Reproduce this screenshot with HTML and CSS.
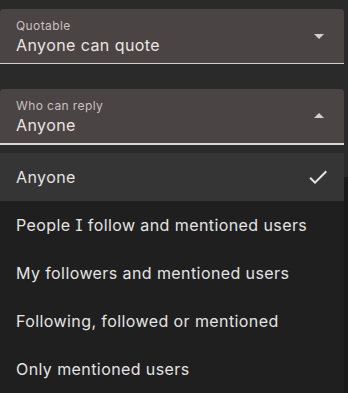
FILE: index.html
```html
<!DOCTYPE html>
<html>
<head>
<meta charset="utf-8">
<link rel="stylesheet" href="styles.css">
</head>
<body>
<div class="page">
  <div class="field">
    <div class="field-text">
      <div class="label">Quotable</div>
      <div class="value">Anyone can quote</div>
    </div>
    <svg class="arrow" viewBox="0 0 24 24" width="24" height="24"><path d="M7 10l5 5 5-5z" fill="#d8d0d0"/></svg>
  </div>
  <div class="field focused">
    <div class="field-text">
      <div class="label">Who can reply</div>
      <div class="value">Anyone</div>
    </div>
    <svg class="arrow" viewBox="0 0 24 24" width="24" height="24"><path d="M7 14l5-5 5 5z" fill="#d8d0d0"/></svg>
  </div>
  <ul class="menu">
    <li class="item selected"><span>Anyone</span>
      <svg class="check" viewBox="0 0 24 24" width="24" height="24"><path d="M9 16.17L4.83 12l-1.42 1.41L9 19 21 7l-1.41-1.41z" fill="#e6e6e6"/></svg>
    </li>
    <li class="item"><span>People I follow and mentioned users</span></li>
    <li class="item"><span>My followers and mentioned users</span></li>
    <li class="item"><span>Following, followed or mentioned</span></li>
    <li class="item"><span>Only mentioned users</span></li>
  </ul>
  <div class="edge"></div>
</div>
</body>
</html>
```

FILE: styles.css
```css
html, body {
  margin: 0;
  padding: 0;
  background: #2a2a2a;
  overflow: hidden;
}
.page {
  position: relative;
  width: 348px;
  height: 393px;
  padding-top: 9px;
  box-sizing: border-box;
  font-family: Inter, "Noto Sans", sans-serif;
  font-feature-settings: "cv08" 1;
}
.field {
  width: 344px;
  height: 55px;
  box-sizing: border-box;
  background: #4a4444;
  border-radius: 4px 4px 0 0;
  border-bottom: 1px solid #d6cccc;
  display: flex;
  align-items: center;
  padding: 0 13px 0 16px;
  margin-bottom: 25px;
}
.field.focused {
  border-bottom: 2px solid #ddd5d5;
  height: 56px;
  margin-bottom: 8px;
}
.field-text {
  flex: 1;
  padding-top: 2px;
}
.label {
  font-size: 12px;
  line-height: 16px;
  color: #c9c0c0;
  letter-spacing: 0.4px;
}
.value {
  font-size: 16px;
  line-height: 22px;
  color: #ece4e4;
  letter-spacing: 0.42px;
}
.field.focused .field-text {
  padding-top: 1px;
}
.arrow {
  display: block;
  flex: none;
}
.menu {
  list-style: none;
  margin: 0;
  padding: 0;
  width: 344px;
  background: #1f1f1f;
}
.item {
  height: 48px;
  display: flex;
  align-items: center;
  justify-content: space-between;
  padding: 0 14px 0 16px;
  font-size: 16px;
  color: #e4e4e4;
  letter-spacing: 0.41px;
}
.item.selected {
  background: #353535;
}
.check {
  display: block;
}
.edge {
  position: absolute;
  left: 344px;
  top: 177px;
  width: 4px;
  height: 216px;
  background: #1a1a1a;
}
```
